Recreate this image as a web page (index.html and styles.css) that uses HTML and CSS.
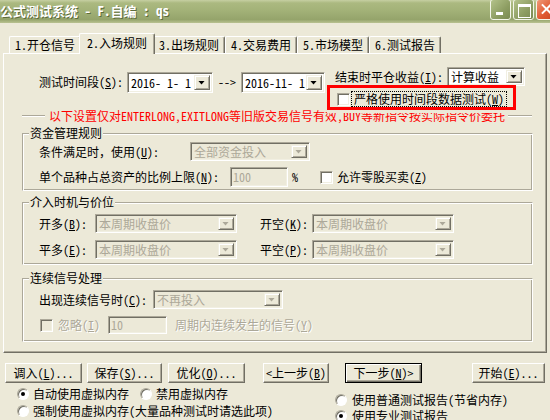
FILE: index.html
```html
<!DOCTYPE html>
<html>
  <head>
    <meta charset="utf-8" />
    <title>公式测试系统</title>
    <link rel="stylesheet" href="styles.css">
  </head>
  <body>
    <div class="titlebar">
      <span class="title">公式测试系统 - F.自编 : qs</span>
      <div class="caption-buttons">
        <span class="cap-btn min"></span>
        <span class="cap-btn max"></span>
        <span class="cap-btn close"></span>
      </div>
    </div>

    <div class="tabs">
      <span class="tab">1.开仓信号</span>
      <span class="tab active">2.入场规则</span>
      <span class="tab">3.出场规则</span>
      <span class="tab">4.交易费用</span>
      <span class="tab">5.市场模型</span>
      <span class="tab">6.测试报告</span>
    </div>

    <div class="panel">
      <div class="dates">
        <span class="lbl lbl-period">测试时间段(<u>S</u>):</span>
        <div class="combo date-from"><span class="val">2016- 1- 1</span><span class="drop"></span></div>
        <span class="arrow">--&gt;</span>
        <div class="combo date-to"><span class="val">2016-11- 1</span><span class="drop"></span></div>
        <span class="lbl lbl-end">结束时平仓收益(<u>I</u>):</span>
        <div class="combo result"><span class="val">计算收益</span><span class="drop"></span></div>
      </div>

      <div class="mark">
        <div class="mark-box">
          <span class="check"></span>
          <span class="focus">严格使用时间段数据测试(<u>W</u>)</span>
        </div>
      </div>

      <div class="note">
        <span class="rule rule-left"></span>
        <span class="note-text">以下设置仅对ENTERLONG,EXITLONG等旧版交易信号有效,BUY等新指令按实际指令价委托</span>
        <span class="rule rule-right"></span>
      </div>

      <fieldset class="group group-money">
        <legend>资金管理规则</legend>
        <div class="row row-u">
          <span class="lbl lbl-u">条件满足时，使用(<u>U</u>):</span>
          <div class="combo off w-money"><span class="val">全部资金投入</span><span class="drop"></span></div>
        </div>
        <div class="row row-n">
          <span class="lbl lbl-n">单个品种占总资产的比例上限(<u>N</u>):</span>
          <div class="edit off w-ratio">100</div>
          <span class="pct">%</span>
          <span class="check odd-lot"></span>
          <span class="check-text">允许零股买卖(<u>Z</u>)</span>
        </div>
      </fieldset>

      <fieldset class="group group-entry">
        <legend>介入时机与价位</legend>
        <div class="row row-b">
          <span class="lbl lbl-short">开多(<u>B</u>):</span>
          <div class="combo off w-price"><span class="val">本周期收盘价</span><span class="drop"></span></div>
          <span class="lbl lbl-short2">开空(<u>K</u>):</span>
          <div class="combo off w-price"><span class="val">本周期收盘价</span><span class="drop"></span></div>
        </div>
        <div class="row row-e">
          <span class="lbl lbl-short">平多(<u>E</u>):</span>
          <div class="combo off w-price"><span class="val">本周期收盘价</span><span class="drop"></span></div>
          <span class="lbl lbl-short2">平空(<u>P</u>):</span>
          <div class="combo off w-price"><span class="val">本周期收盘价</span><span class="drop"></span></div>
        </div>
      </fieldset>

      <fieldset class="group group-repeat">
        <legend>连续信号处理</legend>
        <div class="row row-c">
          <span class="lbl lbl-c">出现连续信号时(<u>C</u>):</span>
          <div class="combo off w-repeat"><span class="val">不再投入</span><span class="drop"></span></div>
        </div>
        <div class="row row-i">
          <span class="check off"></span>
          <span class="muted ignore">忽略(<u>I</u>)</span>
          <div class="edit off w-count">10</div>
          <span class="muted">周期内连续发生的信号(<u>Y</u>)</span>
        </div>
      </fieldset>
    </div>

    <div class="buttons">
      <button class="btn b-load">调入(<u>L</u>)...</button>
      <button class="btn b-save">保存(<u>S</u>)...</button>
      <button class="btn b-opt">优化(<u>O</u>)...</button>
      <button class="btn b-prev">&lt;上一步(<u>B</u>)</button>
      <button class="btn b-next default">下一步(<u>N</u>)&gt;</button>
      <button class="btn b-start">开始(<u>E</u>)...</button>
    </div>

    <div class="options">
      <div class="opt-col memory">
        <div class="opt-row first">
          <span class="radio on"></span><span class="opt-text">自动使用虚拟内存</span>
          <span class="radio no-vm"></span><span class="opt-text">禁用虚拟内存</span>
        </div>
        <div class="opt-row">
          <span class="radio"></span><span class="opt-text">强制使用虚拟内存(大量品种测试时请选此项)</span>
        </div>
      </div>
      <div class="opt-col report">
        <div class="opt-row first">
          <span class="radio"></span><span class="opt-text">使用普通测试报告(节省内存)</span>
        </div>
        <div class="opt-row">
          <span class="radio on"></span><span class="opt-text">使用专业测试报告</span>
        </div>
      </div>
    </div>
  </body>
</html>
```

FILE: styles.css
```css
* {
  box-sizing: border-box;
}
body {
  margin: 0;
  width: 550px;
  height: 420px;
  overflow: hidden;
  background: #ece9d8;
  color: #000;
  font: 12px/14px "Noto Sans Mono CJK SC", "Noto Sans CJK SC", sans-serif;
}
u {
  text-decoration: underline;
  text-underline-offset: 1px;
}

/* title bar */
.titlebar {
  display: flex;
  height: 23px;
  background: linear-gradient(#c6cfa2, #abb980 3px, #a3b278 45%, #95a46b 85%, #b9c291);
}
.title {
  color: #fff;
  font-weight: bold;
  font-size: 13px;
  line-height: 22px;
  white-space: pre;
  text-shadow: 1px 1px #5d6b3b;
}
.caption-buttons {
  display: flex;
  gap: 2px;
  margin: -1px -7px 0 auto;
}
.cap-btn {
  position: relative;
  width: 21px;
  height: 21px;
  border: 1px solid #f4f6ea;
  border-radius: 3px;
  background: linear-gradient(135deg, #b3c28a, #8d9d62 60%, #7a8a52);
}
.cap-btn.min::after {
  content: "";
  position: absolute;
  left: 5px;
  bottom: 4px;
  width: 7px;
  height: 3px;
  background: #fff;
}
.cap-btn.max::after {
  content: "";
  position: absolute;
  left: 4px;
  top: 4px;
  width: 11px;
  height: 10px;
  border: 1px solid #fff;
  border-top-width: 3px;
}
.cap-btn.close {
  background: linear-gradient(135deg, #f09a78, #e05a33 55%, #c8441f);
}
.cap-btn.close::before,
.cap-btn.close::after {
  content: "";
  position: absolute;
  left: 3px;
  top: 8px;
  width: 13px;
  height: 2px;
  background: #fff;
  transform: rotate(45deg);
}
.cap-btn.close::after {
  transform: rotate(-45deg);
}

/* tabs */
.tabs {
  position: relative;
  z-index: 1;
  display: flex;
  align-items: flex-end;
  height: 20px;
  margin-top: 10px;
  padding-left: 9px;
}
.tab {
  height: 17px;
  padding: 0 5px;
  border: 1px solid;
  border-color: #fff #716f64 transparent #fff;
  border-bottom: 0;
  border-radius: 2px 2px 0 0;
  box-shadow: inset -1px 0 #aca899;
  background: #ece9d8;
  line-height: 15px;
  white-space: nowrap;
}
.tab.active {
  position: relative;
  height: 21px;
  margin: 0 -2px -1px;
  padding: 0 7px;
  line-height: 17px;
}

/* tab page */
.panel {
  width: 544px;
  height: 300px;
  margin-left: 3px;
  border: 1px solid;
  border-color: #fff #716f64 #716f64 #fff;
  box-shadow: inset -1px -1px #aca899;
}
.lbl {
  white-space: nowrap;
  flex: none;
}
.dates {
  display: flex;
  align-items: flex-start;
  margin-top: 13px;
  padding-left: 35px;
}
.lbl-period {
  width: 88px;
  margin-top: 8px;
}
.arrow {
  width: 23px;
  margin: 8px 0 0 5px;
}
.lbl-end {
  width: 112px;
  margin: 3px 0 0 10px;
}

/* sunken fields */
.combo,
.edit {
  display: flex;
  align-items: center;
  flex: none;
  height: 19px;
  padding: 2px;
  border: 1px solid;
  border-color: #aca899 #fff #fff #aca899;
  box-shadow: inset 1px 1px #716f64, inset -1px -1px #f1efe2;
  background: #fff;
  white-space: pre;
}
.val {
  padding-left: 1px;
}
.drop {
  position: relative;
  width: 16px;
  height: 100%;
  margin-left: auto;
  border: 1px solid;
  border-color: #f1efe2 #716f64 #716f64 #f1efe2;
  box-shadow: inset 1px 1px #fff, inset -1px -1px #aca899;
  background: #ece9d8;
}
.drop::after {
  content: "";
  position: absolute;
  left: 3px;
  top: 50%;
  width: 7px;
  height: 4px;
  margin-top: -2px;
  background: #000;
  clip-path: polygon(0 0, 100% 0, 50% 100%);
}
.combo.off,
.edit.off {
  background: #ece9d8;
  color: #aca899;
}
.combo.off .drop::after {
  background: #aca899;
}
.date-from {
  width: 86px;
  height: 21px;
  margin-top: 5px;
}
.date-to {
  width: 84px;
  height: 21px;
  margin-top: 5px;
}
.result {
  width: 78px;
}

/* highlighted checkbox */
.mark {
  position: relative;
  z-index: 1;
  width: 189px;
  margin: -8px 0 -3px 323px;
  padding-bottom: 3px;
  background: #ece9d8;
}
.mark-box {
  display: flex;
  align-items: center;
  height: 25px;
  padding: 3px 0 0 7px;
  border: 3px solid #f00;
}
.check {
  flex: none;
  width: 13px;
  height: 13px;
  border: 1px solid;
  border-color: #aca899 #fff #fff #aca899;
  box-shadow: inset 1px 1px #716f64, inset -1px -1px #f1efe2;
  background: #fff;
}
.check.off {
  background: #ece9d8;
}
.focus {
  margin-left: 2px;
  padding: 0 2px;
  outline: 1px dotted #000;
  outline-offset: 0;
  white-space: nowrap;
}

/* red note line */
.note {
  display: flex;
  align-items: center;
  height: 12px;
  margin-left: 18px;
}
.rule {
  flex: none;
  height: 2px;
  border-top: 1px solid #aca899;
  border-bottom: 1px solid #fff;
}
.rule-left {
  width: 23px;
}
.rule-right {
  width: 24px;
}
.note-text {
  margin: 0 3px 0 4px;
  color: #f00;
  line-height: 12px;
  white-space: nowrap;
}

/* group boxes */
.group {
  width: 511px;
  min-width: 0;
  margin: 0 0 0 18px;
  padding: 0;
  border: 1px solid;
  border-color: #aca899 #fff #fff #aca899;
  box-shadow: inset 1px 1px #fff, inset -1px -1px #aca899;
}
.group legend {
  margin-left: 6px;
  padding: 0 1px;
  line-height: 14px;
  background: #ece9d8;
}
.group-money {
  margin-top: 4px;
  padding-bottom: 3px;
}
.group-entry {
  margin-top: 4px;
  padding-bottom: 5px;
}
.group-repeat {
  margin-top: 6px;
  padding-bottom: 7px;
}
.row {
  display: flex;
  align-items: center;
  padding-left: 16px;
}
.row-u {
  margin-top: 2px;
}
.row-n {
  margin-top: 6px;
}
.row-b,
.row-c {
  margin-top: 5px;
}
.row-e,
.row-i {
  margin-top: 7px;
}
.lbl-u {
  width: 151px;
}
.w-money {
  width: 120px;
}
.lbl-n {
  width: 191px;
}
.w-ratio {
  width: 58px;
  height: 20px;
}
.pct {
  margin-left: 4px;
}
.odd-lot {
  margin-left: 22px;
}
.check-text {
  margin-left: 4px;
}
.lbl-short {
  width: 56px;
}
.lbl-short2 {
  width: 52px;
  margin-left: 23px;
}
.w-price {
  width: 142px;
}
.lbl-c {
  width: 114px;
}
.w-repeat {
  width: 130px;
}
.row-i {
  padding-left: 17px;
}
.muted {
  color: #aca899;
  text-shadow: 1px 1px #fff;
  white-space: nowrap;
}
.ignore {
  width: 50px;
  margin-left: 5px;
}
.w-count {
  width: 59px;
  height: 18px;
  margin-right: 8px;
}

/* command buttons */
.buttons {
  display: flex;
  margin-top: 10px;
}
.btn {
  height: 20px;
  padding: 0;
  border: 1px solid;
  border-color: #fff #716f64 #716f64 #fff;
  box-shadow: inset -1px -1px #aca899;
  background: #ece9d8;
  color: #000;
  font: inherit;
  white-space: nowrap;
}
.btn.default {
  border-color: #000;
  box-shadow: inset 1px 1px #fff, inset -1px -1px #716f64, inset -2px -2px #aca899;
}
.b-load {
  width: 77px;
  margin-left: 5px;
}
.b-save {
  width: 75px;
  margin-left: 5px;
}
.b-opt {
  width: 77px;
  margin-left: 6px;
}
.b-prev {
  width: 66px;
  margin-left: 18px;
}
.b-next {
  width: 77px;
  margin-left: 16px;
}
.b-start {
  width: 73px;
  margin-left: 50px;
}

/* radio options */
.options {
  display: flex;
}
.opt-col.memory {
  width: 335px;
  padding: 4px 0 0 17px;
}
.opt-col.report {
  padding-top: 10px;
}
.opt-row {
  display: flex;
  align-items: center;
  height: 14px;
  margin-top: 3px;
}
.report .opt-row {
  margin-top: 2px;
}
.opt-row.first {
  margin-top: 0;
}
.radio {
  position: relative;
  flex: none;
  width: 12px;
  height: 12px;
  border: 1px solid;
  border-color: #aca899 #fff #fff #aca899;
  border-radius: 50%;
  box-shadow: inset 1px 1px #716f64;
  background: #fff;
}
.radio.on::after {
  content: "";
  position: absolute;
  left: 3px;
  top: 3px;
  width: 4px;
  height: 4px;
  border-radius: 50%;
  background: #000;
}
.opt-text {
  margin-left: 4px;
  white-space: nowrap;
}
.report .opt-text {
  margin-left: 5px;
}
.radio.no-vm {
  margin-left: 11px;
}
```
